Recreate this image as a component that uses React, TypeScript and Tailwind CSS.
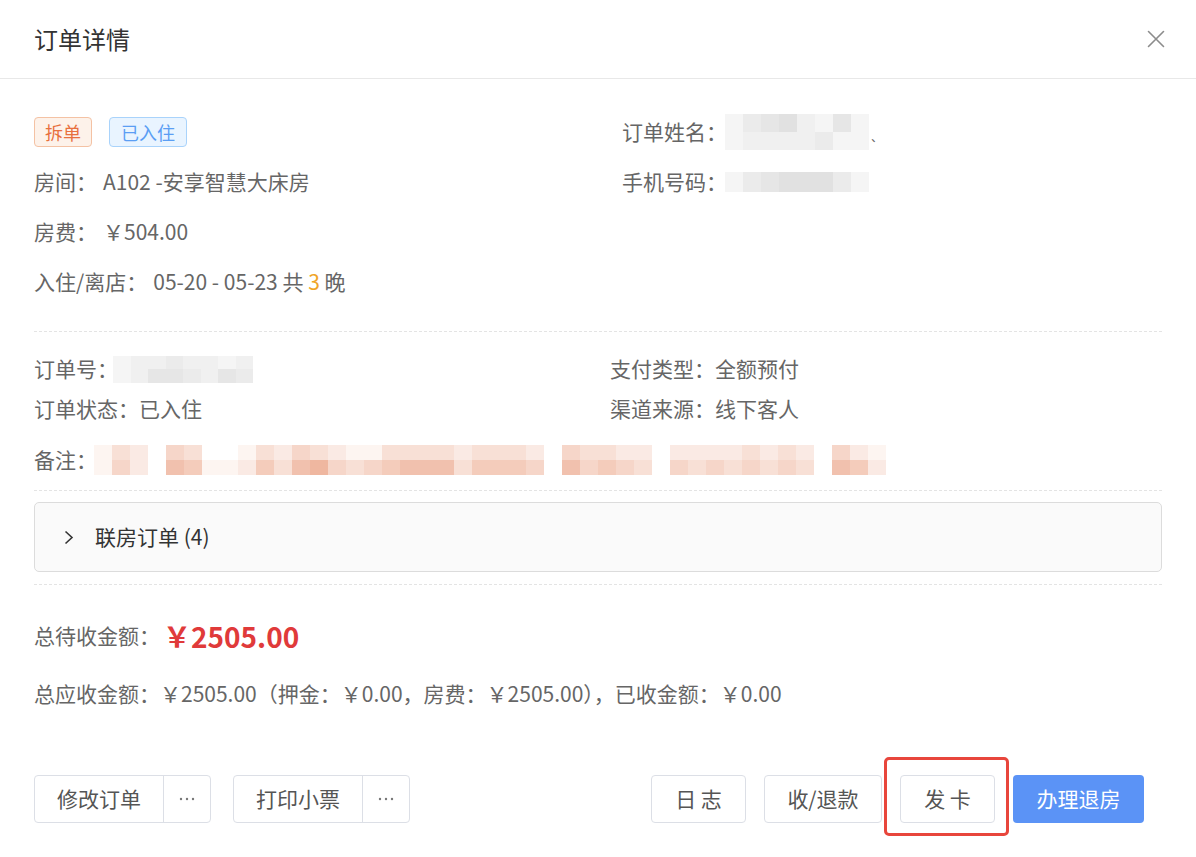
import React from 'react';

// mosaic shades, 0 = white .. 9 = strongest
const NAME_ROWS = ['13452141', '12222311'];
const PHONE_ROWS = ['13455531'];
const ORDER_NO_ROWS = ['12232212', '12443243'];
const REMARK_ROWS = [
  '13204300132432113333233320433220222232320421',
  '14206511253674345666355540645430434343430652',
];

const salmon = (n: number) => {
  const t = Math.min(n / 7, 1);
  const r = Math.round(255 - t * 16);
  const g = Math.round(255 - t * 72);
  const b = Math.round(255 - t * 95);
  return `rgb(${r},${g},${b})`;
};

const gray = (n: number) => {
  const v = Math.round(250 - n * 5);
  return `rgb(${v},${v},${v})`;
};

const Mosaic = ({
  rows,
  cellW,
  cellH,
  tone,
}: {
  rows: string[];
  cellW: number;
  cellH: number;
  tone: (n: number) => string;
}) => (
  <div className="flex flex-col">
    {rows.map((row, ri) => (
      <div key={ri} className="flex">
        {row.split('').map((c, ci) => (
          <div key={ci} style={{ width: cellW, height: cellH, background: tone(Number(c)) }} />
        ))}
      </div>
    ))}
  </div>
);

const Dots = () => (
  <svg width="16" height="4" viewBox="0 0 16 4" fill="#777">
    <circle cx="2" cy="2" r="1.2" />
    <circle cx="8" cy="2" r="1.2" />
    <circle cx="14" cy="2" r="1.2" />
  </svg>
);

const SplitButton = ({ label }: { label: string }) => (
  <div className="flex h-[48px] rounded-[4px] border border-[#dcdfe6] bg-white text-[#555]">
    <button className="w-[129px] border-r border-[#dcdfe6] text-[21px]">{label}</button>
    <button className="flex w-[46px] items-center justify-center">
      <Dots />
    </button>
  </div>
);

const PlainButton = ({ label, w }: { label: string; w: string }) => (
  <button className={`h-[48px] ${w} rounded-[4px] border border-[#dcdfe6] bg-white text-[21px] text-[#555]`}>
    {label}
  </button>
);

export default function App() {
  return (
    <div className="h-[857px] w-[1196px] overflow-hidden bg-white font-['Noto_Sans_CJK_SC','Noto_Sans',sans-serif] text-[21px] text-[#666]">
      {/* Header */}
      <div className="flex h-[79px] items-center justify-between border-b border-[#e8e8e8] pl-[34px] pr-[31px]">
        <h1 className="text-[24px] text-[#333]">订单详情</h1>
        <svg width="18" height="18" viewBox="0 0 18 18" stroke="#8c8c8c" strokeWidth="1.6" strokeLinecap="round">
          <path d="M1.5 1.5l15 15M16.5 1.5l-15 15" />
        </svg>
      </div>

      <div className="px-[34px]">
        {/* Room info */}
        <div className="flex pt-[28px] pb-[24px]">
          <div className="w-[588px]">
            <div className="flex h-[50px] items-center gap-[17px]">
              <span className="flex h-[30px] items-center rounded-[4px] border border-[#f4c2a4] bg-[#fdf2ea] px-[10px] text-[18px] text-[#e8703f]">
                拆单
              </span>
              <span className="flex h-[30px] items-center rounded-[4px] border border-[#a9d3fb] bg-[#e9f4ff] px-[11px] text-[18px] text-[#5b9ef4]">
                已入住
              </span>
            </div>
            <div className="flex h-[50px] items-center">
              房间：<span className="ml-[6px]">A102 -安享智慧大床房</span>
            </div>
            <div className="flex h-[50px] items-center">
              房费：<span className="ml-[6px]">￥504.00</span>
            </div>
            <div className="flex h-[50px] items-center">
              入住/离店：
              <span className="ml-[6px]">
                05-20 - 05-23 共 <span className="text-[#f0a428]">3</span> 晚
              </span>
            </div>
          </div>
          <div className="flex-1">
            <div className="flex h-[50px] items-center">
              订单姓名：
              <span className="-ml-[2px]">
                <Mosaic rows={NAME_ROWS} cellW={18} cellH={18} tone={gray} />
              </span>
              <span className="ml-[2px] mt-[10px] text-[12px]">、</span>
            </div>
            <div className="flex h-[50px] items-center">
              手机号码：
              <span className="-ml-[2px]">
                <Mosaic rows={PHONE_ROWS} cellW={18} cellH={20} tone={gray} />
              </span>
            </div>
          </div>
        </div>

        <div className="border-t border-dashed border-[#e4e4e4]" />

        {/* Order info */}
        <div className="pt-[17px] pb-[10px]">
          <div className="flex">
            <div className="w-[576px]">
              <div className="flex h-[40px] items-center">
                订单号：
                <span className="-ml-[5px]">
                  <Mosaic rows={ORDER_NO_ROWS} cellW={17.5} cellH={13.5} tone={gray} />
                </span>
              </div>
              <div className="flex h-[40px] items-center">订单状态：已入住</div>
            </div>
            <div className="flex-1">
              <div className="flex h-[40px] items-center">支付类型：全额预付</div>
              <div className="flex h-[40px] items-center">渠道来源：线下客人</div>
            </div>
          </div>
          <div className="mt-[11px] flex h-[40px] items-center">
            备注：
            <span className="-ml-[3px]">
              <Mosaic rows={REMARK_ROWS} cellW={18} cellH={15} tone={salmon} />
            </span>
          </div>
        </div>

        <div className="border-t border-dashed border-[#e4e4e4]" />

        {/* Linked rooms collapse */}
        <div className="mt-[11px] flex h-[70px] items-center rounded-[5px] border border-[#dcdcdc] bg-[#fafafa] pl-[29px] text-[#333]">
          <svg width="10" height="15" viewBox="0 0 10 15" fill="none" stroke="#333" strokeWidth="1.6">
            <path d="M1.5 1.5l6.5 6-6.5 6" />
          </svg>
          <span className="ml-[21px]">联房订单 (4)</span>
        </div>

        <div className="mt-[12px] border-t border-dashed border-[#e4e4e4]" />

        {/* Amounts */}
        <div className="mt-[26px] flex h-[50px] items-center">
          总待收金额：
          <span className="ml-[3px] text-[28px] font-bold text-[#e03a3a]">￥2505.00</span>
        </div>
        <div className="mt-[18px] flex h-[30px] items-center">
          总应收金额：￥2505.00（押金：￥0.00，房费：￥2505.00），已收金额：￥0.00
        </div>

        {/* Footer actions */}
        <div className="mt-[66px] flex items-center justify-between pr-[18px]">
          <div className="flex gap-[22px]">
            <SplitButton label="修改订单" />
            <SplitButton label="打印小票" />
          </div>
          <div className="flex gap-[18px]">
            <PlainButton label="日 志" w="w-[95px]" />
            <PlainButton label="收/退款" w="w-[118px]" />
            <div className="relative">
              <PlainButton label="发 卡" w="w-[95px]" />
              <div className="pointer-events-none absolute -top-[18px] -right-[14px] -bottom-[13px] -left-[16px] rounded-[5px] border-[3px] border-[#e8463c]" />
            </div>
            <button className="h-[48px] w-[131px] rounded-[4px] bg-[#5b93f6] text-[21px] text-white">办理退房</button>
          </div>
        </div>
      </div>
    </div>
  );
}
